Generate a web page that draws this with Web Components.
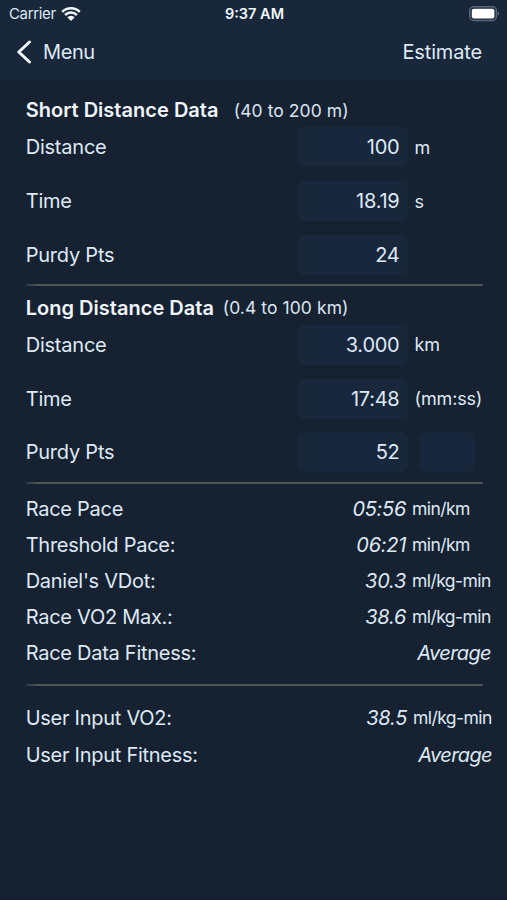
<!DOCTYPE html>
<html lang="en"><head><meta charset="utf-8"><title>Estimate</title>
<style>
html,body{margin:0;height:100%;background:#162232}
body{font-family:Inter,"Liberation Sans",sans-serif;color:#dfe9f5;overflow:hidden}
</style></head><body>
<pace-app></pace-app>
<script>
function define(name, html, setup){
  const tpl=document.createElement('template');
  tpl.innerHTML=html;
  customElements.define(name,class extends HTMLElement{
    connectedCallback(){
      if(this.shadowRoot)return;
      const root=this.attachShadow({mode:'open'});
      root.append(tpl.content.cloneNode(true));
      if(setup)setup(this,root);
    }
  });
}
define('status-bar',`<style>
:host{display:grid;grid-template-columns:1fr auto 1fr;align-items:center;height:27px;padding:0 7px 0 9px;font-size:15px}
.l{display:flex;align-items:center;gap:5px;letter-spacing:-.35px}
.t{font-weight:600;font-size:14.5px;color:#f2f7fc}
.b{justify-self:end;display:block}
svg{display:block}
</style><div class="l"><span>Carrier</span><svg width="20" height="16" viewBox="0 0 20 16"><path d="M1.2 5.9A12.6 12.6 0 0 1 18.8 5.9M4.1 9A8.4 8.4 0 0 1 15.9 9" fill="none" stroke="#f4f8fc" stroke-width="2.5"/><path d="M10 15 6.3 11.3A5.2 5.2 0 0 1 13.7 11.3Z" fill="#f4f8fc"/></svg></div>
<span class="t">9:37 AM</span>
<svg class="b" width="31" height="16" viewBox="0 0 31 16"><rect x=".8" y=".8" width="26.6" height="13.6" rx="4" fill="none" stroke="#5b6878" stroke-width="1.5"/><rect x="2.8" y="2.8" width="22.6" height="9.6" rx="2" fill="#fff"/><path d="M28.8 5.2q2.2 2.4 0 4.8z" fill="#778391"/></svg>`);
define('nav-bar',`<style>
:host{display:flex;justify-content:space-between;align-items:center;height:50px;padding:0 25px 0 16px;font-size:20px;letter-spacing:-.15px}
.m{display:flex;align-items:center;gap:11px;letter-spacing:-.4px}
svg{display:block}
</style><div class="m"><svg width="16" height="24" viewBox="0 0 16 24"><path d="M13.5 2 2.8 12 13.5 22" fill="none" stroke="#f4f8fc" stroke-width="3" stroke-linecap="round" stroke-linejoin="round"/></svg><slot name="back"></slot></div><slot></slot>`);
define('section-title',`<style>
:host{display:flex;align-items:center;height:22px;font-size:20px;font-weight:600;color:#f0f5fb;white-space:nowrap}
b{font-weight:600;flex:0 0 var(--w);letter-spacing:.02px}
span{font-size:17.5px;font-weight:400;color:#dbe5f1;letter-spacing:.08px}
</style><b><slot></slot></b><span><slot name="range"></slot></span>`);
define('input-row',`<style>
:host{display:grid;grid-template-columns:272.3px 110px 1fr;align-items:center;height:53.8px;font-size:20px}
.n{letter-spacing:-.22px}
.f{box-sizing:border-box;height:40px;padding-right:8.5px;border-radius:6px;background:linear-gradient(90deg,#18273a,#19273d 35%,#19273d 75%,#18273a);display:flex;align-items:center;justify-content:flex-end;letter-spacing:-.25px}
.u{font-size:18px;padding-left:6.5px;letter-spacing:-.15px}
.x{height:40px;width:55px;margin-left:12px;border-radius:6px;background:#19273c}
</style><span class="n"><slot></slot></span><div class="f"></div><span class="u"></span>`,(el,r)=>{
  r.querySelector('.f').textContent=el.getAttribute('value');
  const u=r.querySelector('.u');
  if(el.hasAttribute('extra')){u.className='x'}else u.textContent=el.getAttribute('unit')||'';
});
define('stat-row',`<style>
:host{display:flex;align-items:center;height:36.1px;font-size:20px}
.n{flex:1;letter-spacing:-.27px}
.v{font-style:italic;letter-spacing:-.28px}
.w{letter-spacing:-.6px}
.u{font-size:17.5px;width:79px;margin-left:6px;white-space:nowrap;letter-spacing:-.57px}
</style><span class="n"><slot></slot></span><span class="v"></span>`,(el,r)=>{
  const v=r.querySelector('.v');
  v.textContent=el.getAttribute('value');
  const unit=el.getAttribute('unit');
  if(unit){const s=document.createElement('span');s.className='u';s.textContent=unit;r.append(s)}
  else v.classList.add('w');
});
define('rule-line',`<style>:host{display:block;height:2px;margin-right:24px;background:linear-gradient(90deg,#2b3a42,#4b5856 12px,#4b5856)}</style>`);
define('pace-app',`<style>
:host{display:block;box-sizing:border-box;height:900px;background:#162232;border-bottom:1px solid #151b36}
header{height:80px;background:#19273b}
main{padding:19px 0 0 25.7px}
.stats{padding-right:16px}
</style><header><status-bar></status-bar><nav-bar><span slot="back">Menu</span>Estimate</nav-bar></header>
<main>
<section-title style="--w:208px">Short Distance Data<span slot="range">(40 to 200 m)</span></section-title>
<input-row value="100" unit="m" style="margin-top:-.5px">Distance</input-row>
<input-row value="18.19" unit="s">Time</input-row>
<input-row value="24">Purdy Pts</input-row>
<rule-line style="margin-top:2.1px"></rule-line>
<section-title style="--w:197px;margin-top:11px">Long Distance Data<span slot="range">(0.4 to 100 km)</span></section-title>
<input-row value="3.000" unit="km" style="margin-top:-1px">Distance</input-row>
<input-row value="17:48" unit="(mm:ss)">Time</input-row>
<input-row value="52" extra>Purdy Pts</input-row>
<rule-line style="margin-top:2.6px"></rule-line>
<div class="stats" style="padding-top:6.5px">
<stat-row value="05:56" unit="min/km">Race Pace</stat-row>
<stat-row value="06:21" unit="min/km">Threshold Pace:</stat-row>
<stat-row value="30.3" unit="ml/kg-min">Daniel's VDot:</stat-row>
<stat-row value="38.6" unit="ml/kg-min">Race VO2 Max.:</stat-row>
<stat-row value="Average">Race Data Fitness:</stat-row>
</div>
<rule-line style="margin-top:13px"></rule-line>
<div class="stats" style="padding:13.5px 15px 0 0">
<stat-row style="height:37px" value="38.5" unit="ml/kg-min">User Input VO2:</stat-row>
<stat-row style="height:37px" value="Average">User Input Fitness:</stat-row>
</div>
</main>`);
</script></body></html>
